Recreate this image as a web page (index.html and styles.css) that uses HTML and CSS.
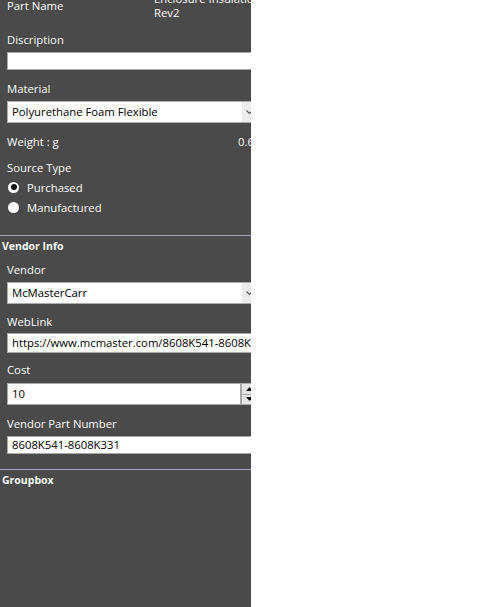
FILE: index.html
```html
<!DOCTYPE html>
<html>
<head>
<meta charset="utf-8">
<link rel="stylesheet" href="styles.css">
</head>
<body>
<div class="panel">
  <div class="content">
    <div class="part-row">
      <div class="label part-label">Part Name</div>
      <div class="part-value">Enclosure Insulation Rev2</div>
    </div>
    <div class="label m12">Discription</div>
    <div class="textbox tb-desc m4"></div>
    <div class="label m11">Material</div>
    <div class="combo m4"><span class="combo-text">Polyurethane Foam Flexible</span><span class="combo-btn"><svg width="7" height="5" viewBox="0 0 7 5"><path d="M0.5 0.5 L3.5 3.5 L6.5 0.5" fill="none" stroke="#555" stroke-width="1.2"/></svg></span></div>
    <div class="weight-row m11"><span class="label">Weight : g</span><span class="weight-val">0.6</span></div>
    <div class="label m10">Source Type</div>
    <div class="radio-row m1"><span class="radio checked"></span><span>Purchased</span></div>
    <div class="radio-row"><span class="radio"></span><span>Manufactured</span></div>
  </div>
  <div class="sep sep1"></div>
  <div class="group-title">Vendor Info</div>
  <div class="content">
    <div class="label m8">Vendor</div>
    <div class="combo m4"><span class="combo-text">McMasterCarr</span><span class="combo-btn"><svg width="7" height="5" viewBox="0 0 7 5"><path d="M0.5 0.5 L3.5 3.5 L6.5 0.5" fill="none" stroke="#555" stroke-width="1.2"/></svg></span></div>
    <div class="label m10">WebLink</div>
    <div class="textbox tb-web m3">https://www.mcmaster.com/8608K541-8608K331</div>
    <div class="label m9">Cost</div>
    <div class="numeric m5"><span class="num-field">10</span><span class="spin"><span class="spin-btn"><svg width="7" height="4" viewBox="0 0 7 4"><path d="M0 4 L3.5 0 L7 4 Z" fill="#111"/></svg></span><span class="spin-btn"><svg width="7" height="4" viewBox="0 0 7 4"><path d="M0 0 L3.5 4 L7 0 Z" fill="#111"/></svg></span></span></div>
    <div class="label m11">Vendor Part Number</div>
    <div class="textbox tb-vpn m4">8608K541-8608K331</div>
  </div>
  <div class="sep sep2"></div>
  <div class="group-title">Groupbox</div>
</div>
</body>
</html>
```
FILE: styles.css
```css
html, body {
  margin: 0;
  padding: 0;
  background: #ffffff;
}
body {
  font-family: "Open Sans", "Noto Sans", sans-serif;
  font-size: 11.3px;
  color: #ffffff;
}
.panel {
  width: 251px;
  height: 607px;
  background: #4a4a4a;
  overflow: hidden;
}
.content {
  width: 290px;
  padding-left: 7px;
  display: flex;
  flex-direction: column;
}
.label {
  line-height: 16px;
  height: 16px;
  white-space: nowrap;
}
.part-row {
  display: flex;
  margin-top: -2px;
}
.part-label {
  width: 147px;
}
.part-value {
  width: 112px;
  line-height: 14px;
  margin-top: -6px;
}
.m1 { margin-top: 1px; }
.m3 { margin-top: 3px; }
.m4 { margin-top: 4px; }
.m5 { margin-top: 5px; }
.m8 { margin-top: 8px; }
.m9 { margin-top: 9px; }
.m10 { margin-top: 10px; }
.m11 { margin-top: 11px; }
.m12 { margin-top: 12px; }
.textbox {
  box-sizing: border-box;
  background: #ffffff;
  border: 1px solid #a9a9a9;
  color: #000000;
  padding-left: 4px;
  white-space: nowrap;
  overflow: hidden;
  width: 260px;
}
.tb-desc { height: 18px; }
.tb-web { height: 20px; line-height: 18px; }
.tb-vpn { height: 18px; line-height: 16px; }
.combo {
  box-sizing: border-box;
  height: 22px;
  width: 258px;
  display: flex;
  background: #ffffff;
  border: 1px solid #acacac;
  color: #000000;
}
.combo-text {
  flex: 1;
  padding-left: 4px;
  line-height: 20px;
  white-space: nowrap;
}
.combo-btn {
  width: 22px;
  background: #ececec;
  display: flex;
  align-items: center;
  padding-left: 4px;
  box-sizing: border-box;
}
.weight-row {
  display: flex;
  width: 283px;
}
.weight-row .label {
  flex: none;
}
.weight-val {
  margin-left: auto;
  width: 52px;
  line-height: 16px;
}
.radio-row {
  display: flex;
  align-items: center;
  height: 20px;
  gap: 8px;
  padding-left: 1px;
}
.radio {
  width: 11px;
  height: 11px;
  border-radius: 50%;
  background: #ffffff;
  box-sizing: border-box;
  display: flex;
  align-items: center;
  justify-content: center;
}
.radio.checked::after {
  content: "";
  width: 6px;
  height: 6px;
  border-radius: 50%;
  background: #111111;
}
.sep {
  height: 1px;
  background: #a4a4bc;
  width: 251px;
}
.sep1 { margin-top: 18px; }
.sep2 { margin-top: 15px; }
.group-title {
  padding-left: 2px;
  font-weight: bold;
  font-size: 10.5px;
  line-height: 16px;
  margin-top: 2px;
}
.numeric {
  display: flex;
  height: 22px;
  width: 262px;
}
.num-field {
  box-sizing: border-box;
  width: 234px;
  background: #ffffff;
  border: 1px solid #a9a9a9;
  color: #000000;
  padding-left: 4px;
  line-height: 20px;
}
.spin {
  display: flex;
  flex-direction: column;
  width: 16px;
  background: #dcdcdc;
  border: 1px solid #a9a9a9;
  box-sizing: border-box;
}
.spin-btn {
  flex: 1;
  display: flex;
  align-items: center;
  justify-content: center;
  background: #e6e6e6;
}
.spin-btn + .spin-btn {
  border-top: 1px solid #a9a9a9;
}
```
